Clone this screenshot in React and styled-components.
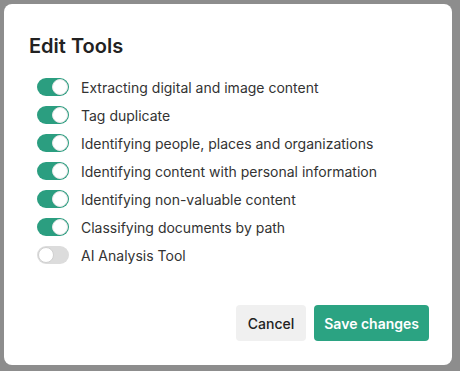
import styled, { createGlobalStyle } from "styled-components";
import { useState } from "react";

const Global = createGlobalStyle`
  html, body {
    margin: 0;
    padding: 0;
    background: #8d8d8d;
    font-family: Inter, "Noto Sans", sans-serif;
  }
`;

const Backdrop = styled.div`
  width: 460px;
  height: 371px;
  padding: 4px 8px 6px 4px;
  box-sizing: border-box;
`;

const Modal = styled.div`
  width: 448px;
  height: 361px;
  box-sizing: border-box;
  background: #fff;
  border-radius: 8px;
  padding: 28px 23px 24px 25px;
  display: flex;
  flex-direction: column;
`;

const Title = styled.h2`
  margin: 0;
  font-size: 20px;
  line-height: 28px;
  font-weight: 600;
  color: #222;
`;

const List = styled.div`
  margin-top: 13px;
  padding-left: 8px;
  display: flex;
  flex-direction: column;
`;

const Row = styled.label`
  height: 28px;
  display: flex;
  align-items: center;
  gap: 12px;
  font-size: 14px;
  color: #333;
  cursor: pointer;
`;

const Track = styled.span`
  position: relative;
  width: 32px;
  height: 18px;
  border-radius: 9px;
  background: ${(p) => (p.$on ? "#2b9e80" : "#dcdcdc")};
  flex-shrink: 0;
`;

const Knob = styled.span`
  position: absolute;
  top: 1px;
  left: ${(p) => (p.$on ? "15px" : "1px")};
  width: 16px;
  height: 16px;
  border-radius: 50%;
  background: #fff;
  box-sizing: border-box;
  border: 1px solid ${(p) => (p.$on ? "#e6e6e6" : "#d0d0d0")};
`;

const Footer = styled.div`
  margin-top: auto;
  display: flex;
  justify-content: flex-end;
  gap: 8px;
`;

const Button = styled.button`
  height: 36px;
  padding: 0 ${(p) => (p.$primary ? "10px" : "12px")};
  border: none;
  border-radius: 4px;
  font-family: Inter, "Noto Sans", sans-serif;
  font-size: 14px;
  font-weight: ${(p) => (p.$primary ? 600 : 500)};
  background: ${(p) => (p.$primary ? "#2ba382" : "#f0f0f0")};
  color: ${(p) => (p.$primary ? "#fff" : "#222")};
  cursor: pointer;
`;

const tools = [
  ["Extracting digital and image content", true],
  ["Tag duplicate", true],
  ["Identifying people, places and organizations", true],
  ["Identifying content with personal information", true],
  ["Identifying non-valuable content", true],
  ["Classifying documents by path", true],
  ["AI Analysis Tool", false],
];

export default function App() {
  const [state, setState] = useState(tools.map((t) => t[1]));

  const toggle = (i) => setState(state.map((v, j) => (j === i ? !v : v)));

  return (
    <>
      <Global />
      <Backdrop>
        <Modal>
          <Title>Edit Tools</Title>
          <List>
            {tools.map(([name], i) => (
              <Row key={name} onClick={() => toggle(i)}>
                <Track $on={state[i]}>
                  <Knob $on={state[i]} />
                </Track>
                {name}
              </Row>
            ))}
          </List>
          <Footer>
            <Button>Cancel</Button>
            <Button $primary>Save changes</Button>
          </Footer>
        </Modal>
      </Backdrop>
    </>
  );
}
